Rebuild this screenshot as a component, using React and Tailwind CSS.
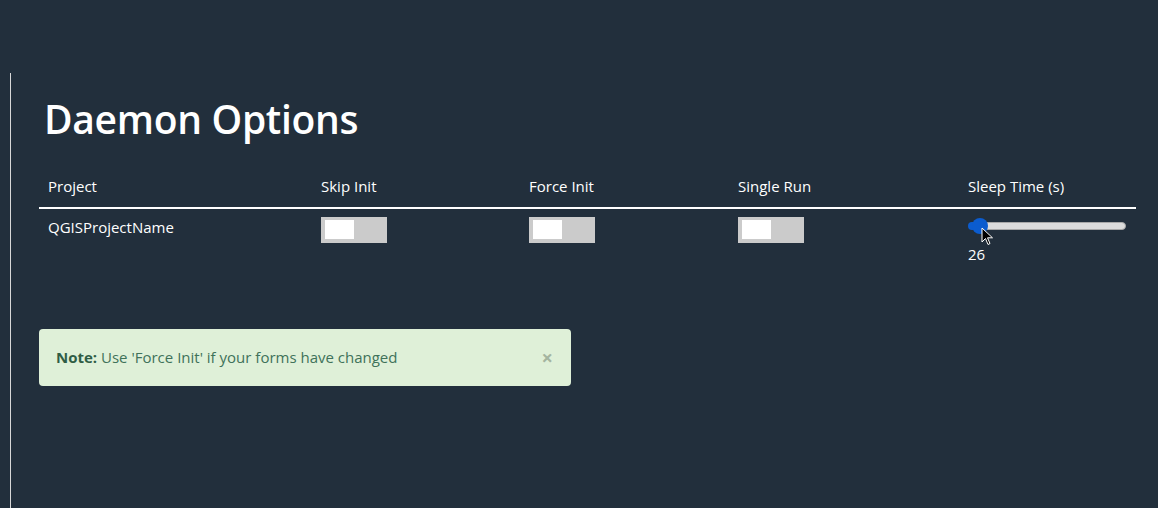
import React from "react";

function Toggle() {
  return (
    <div className="w-[66px] h-[26px] bg-[#cbcbcb] pl-[4px] pt-[3px]">
      <div className="w-[29px] h-[19px] bg-white" />
    </div>
  );
}

export default function App() {
  return (
    <div
      className="w-[1158px] h-[508px] bg-[#222f3c] text-white overflow-hidden flex"
      style={{ fontFamily: '"Open Sans", sans-serif' }}
    >
      <div className="w-[10px] shrink-0" />
      <div className="mt-[73px] w-[1px] h-[435px] bg-[#d8d8d8] shrink-0" />
      <div className="flex-1 pl-[28px] pr-[21px] pt-[73px]">
        <h1 className="mt-[18px] ml-[5px] text-[39px] leading-[56px] font-semibold tracking-[-0.3px]">
          Daemon Options
        </h1>
        <table className="mt-[20px] w-[1097px] text-[15px] leading-[21px] border-collapse">
          <thead>
            <tr className="border-b-2 border-white">
              <th className="w-[274px] text-left font-normal px-[9px] pt-[9px] pb-[10px]">Project</th>
              <th className="w-[208px] text-left font-normal px-[8px] pt-[9px] pb-[10px]">Skip Init</th>
              <th className="w-[209px] text-left font-normal px-[8px] pt-[9px] pb-[10px]">Force Init</th>
              <th className="w-[230px] text-left font-normal px-[8px] pt-[9px] pb-[10px]">Single Run</th>
              <th className="text-left font-normal px-[8px] pt-[9px] pb-[10px]">Sleep Time (s)</th>
            </tr>
          </thead>
          <tbody>
            <tr className="align-top">
              <td className="px-[9px] pt-[8px]">QGISProjectName</td>
              <td className="px-[8px] pt-[8px]"><Toggle /></td>
              <td className="px-[8px] pt-[8px]"><Toggle /></td>
              <td className="px-[8px] pt-[8px]"><Toggle /></td>
              <td className="px-[8px] pt-[8px]">
                <div className="relative w-[160px] h-[18px]">
                  <div className="absolute left-[2px] right-[2px] top-[5px] h-[8px] rounded-full bg-[#dcdcdc] border border-[#a8a8a8]" />
                  <div className="absolute left-[0px] top-[5px] w-[12px] h-[8px] rounded-l-full bg-[#0b5ccf]" />
                  <div className="absolute left-[4px] top-[1px] w-[16px] h-[16px] rounded-full bg-[#0b5ccf]" />
                  <svg className="absolute left-[13px] top-[10px]" width="13" height="19" viewBox="0 0 13 19">
                    <path d="M1 1 L1 15 L4.5 11.5 L7 17.5 L9 16.5 L6.5 10.8 L11.5 10.8 Z" fill="#000" stroke="#fff" strokeWidth="1" strokeLinejoin="round" />
                  </svg>
                </div>
                <div className="mt-[9px]">26</div>
              </td>
            </tr>
          </tbody>
        </table>
        <div className="mt-[64px] w-[532px] h-[57px] rounded-[4px] bg-[#dff0d8] text-[#40725a] flex items-center justify-between pl-[17px] pr-[18px] text-[15px]">
          <div>
            <span className="font-bold text-[#2f5d45]">Note:</span> Use 'Force Init' if your forms have changed
          </div>
          <span className="text-[#a4b5a0] text-[20px] leading-none font-bold">×</span>
        </div>
      </div>
    </div>
  );
}
